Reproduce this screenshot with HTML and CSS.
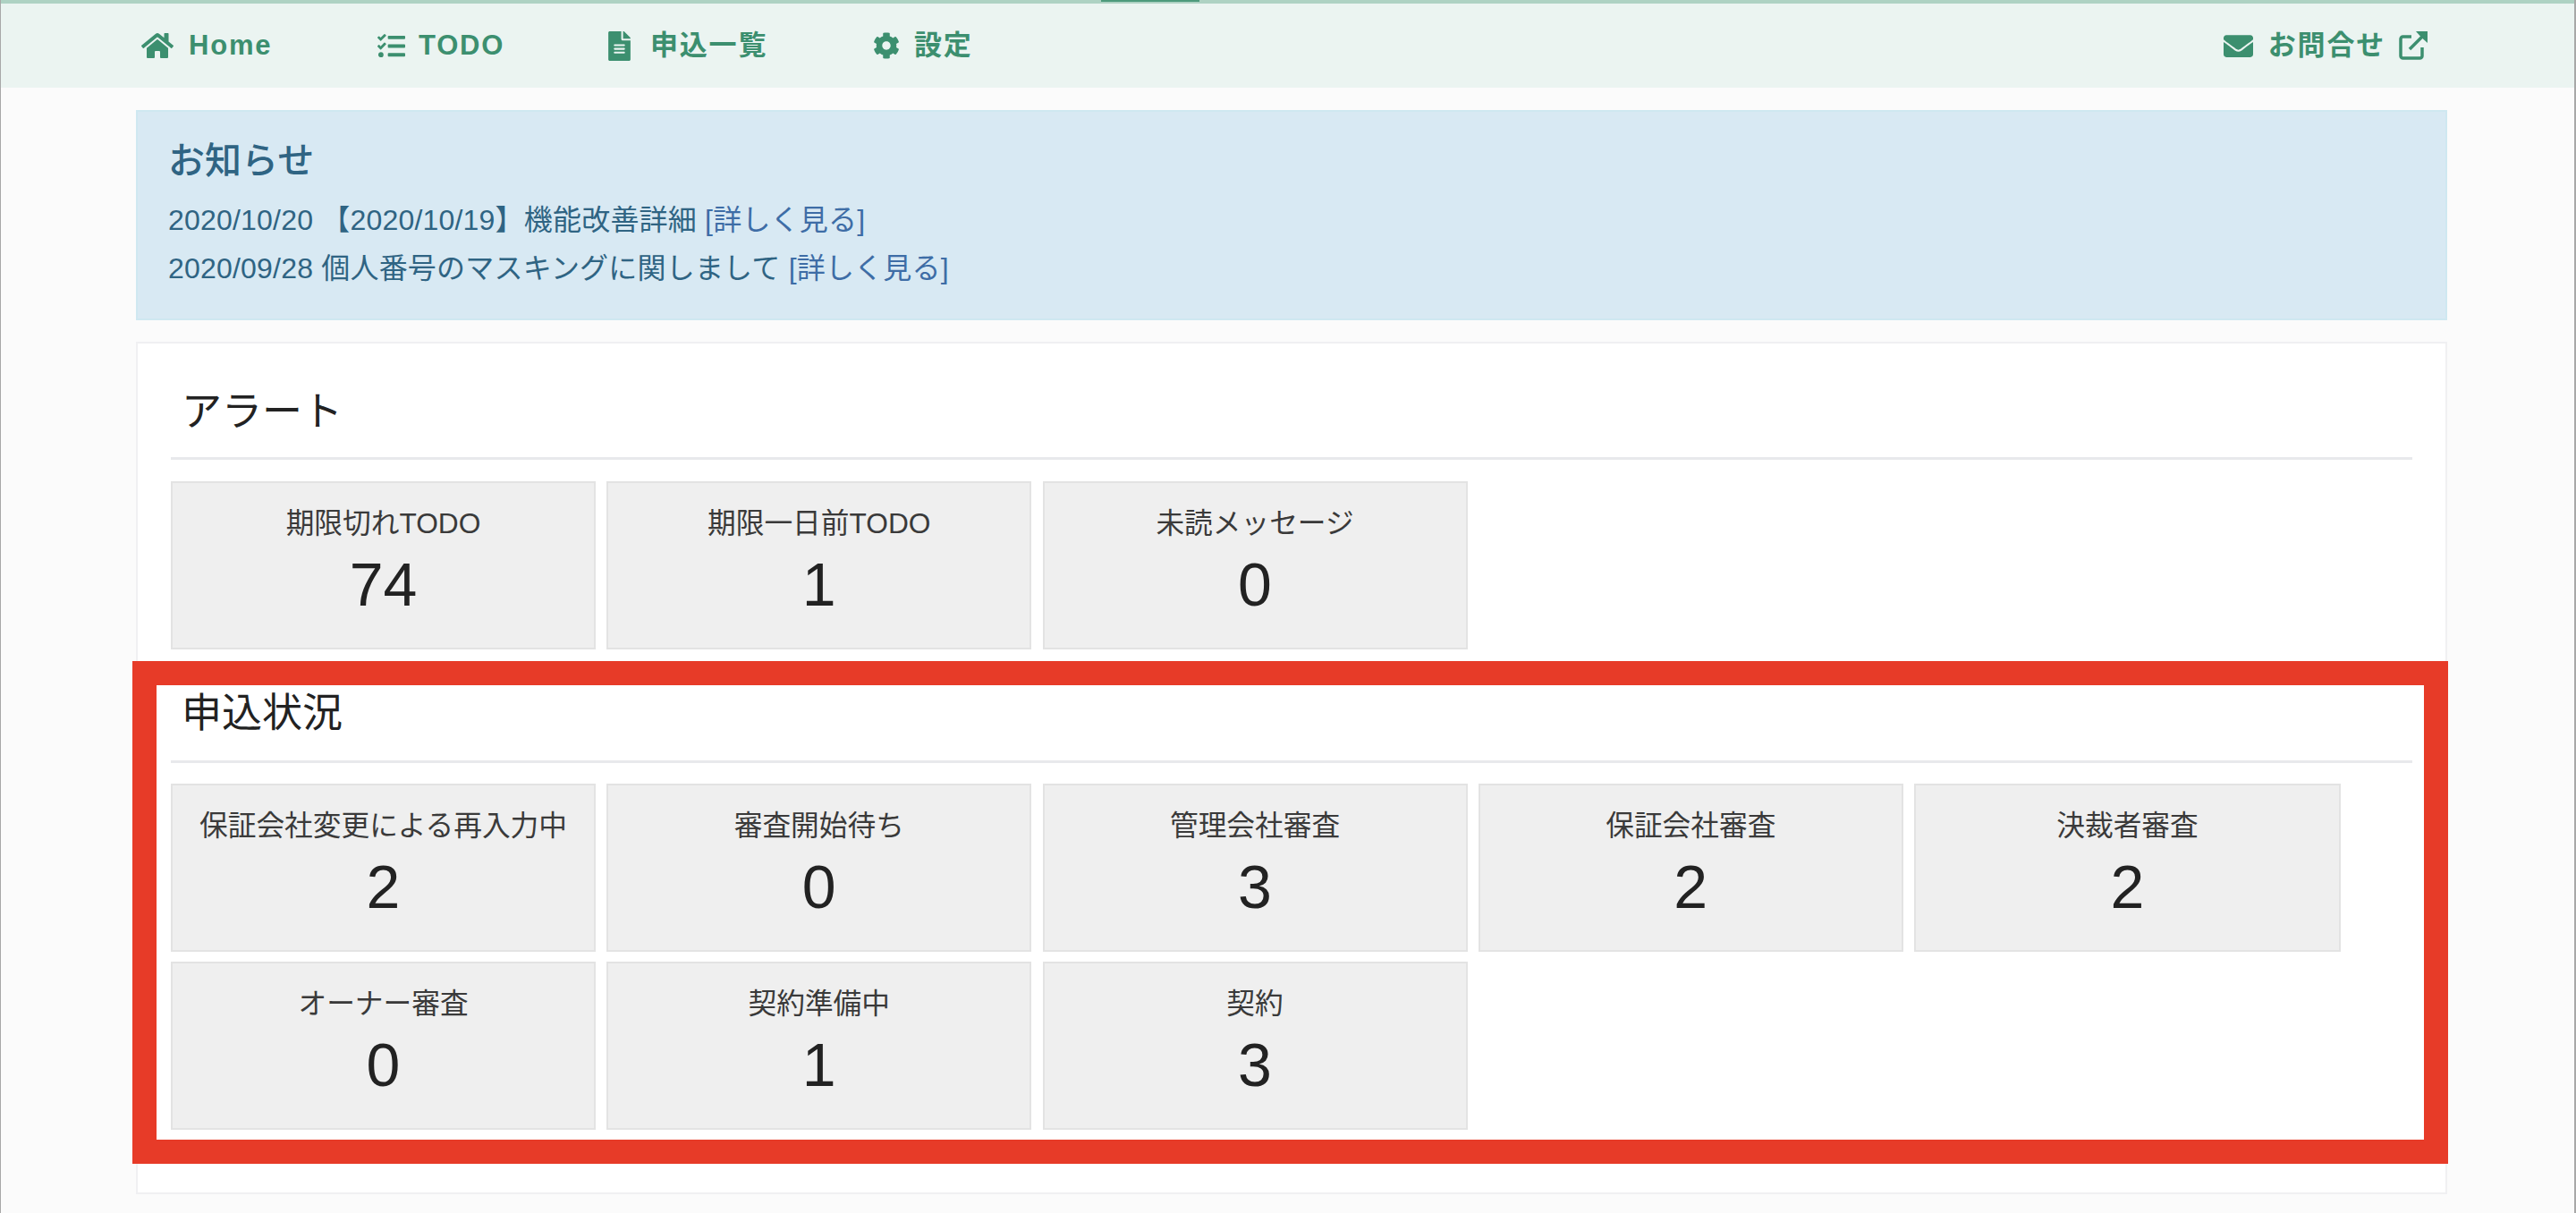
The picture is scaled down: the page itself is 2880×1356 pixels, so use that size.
FILE: index.html
```html
<!DOCTYPE html>
<html lang="ja">
<head>
<meta charset="utf-8">
<title>ダッシュボード</title>
<link rel="stylesheet" href="styles.css">
</head>
<body>
<div class="page">
  <nav class="nav">
    <div class="nav-group">
      <a class="nav-item nav-home"><svg class="ico ico-home" viewBox="0 0 576 512"><path d="M280.37 148.26L96 300.11V464a16 16 0 0 0 16 16l112.06-.29a16 16 0 0 0 15.92-16V368a16 16 0 0 1 16-16h64a16 16 0 0 1 16 16v95.64a16 16 0 0 0 16 16.05L464 480a16 16 0 0 0 16-16V300L295.67 148.26a12.19 12.19 0 0 0-15.3 0zM571.6 251.47L488 182.56V44.05a12 12 0 0 0-12-12h-56a12 12 0 0 0-12 12v72.61L318.47 43a48 48 0 0 0-61 0L4.34 251.47a12 12 0 0 0-1.6 16.9l25.5 31A12 12 0 0 0 45.15 301l235.22-193.74a12.19 12.19 0 0 1 15.3 0L530.9 301a12 12 0 0 0 16.9-1.6l25.5-31a12 12 0 0 0-1.7-16.93z"/></svg>Home</a>
      <a class="nav-item nav-todo"><svg class="ico ico-tasks" viewBox="0 0 512 512"><path d="M139.61 35.5a12 12 0 0 0-17 0L58.93 98.81l-22.7-22.12a12 12 0 0 0-17 0L3.53 92.41a12 12 0 0 0 0 17l47.59 47.4a12.78 12.78 0 0 0 17.61 0l15.59-15.62L156.52 69a12.09 12.09 0 0 0 .09-17zm0 159.19a12 12 0 0 0-17 0l-63.68 63.72-22.7-22.1a12 12 0 0 0-17 0L3.53 252a12 12 0 0 0 0 17L51 316.5a12.77 12.77 0 0 0 17.6 0l15.7-15.69 72.2-72.22a12 12 0 0 0 .09-16.9zM64 368c-26.49 0-48.59 21.5-48.59 48S37.53 464 64 464a48 48 0 0 0 0-96zm432 16H208a16 16 0 0 0-16 16v32a16 16 0 0 0 16 16h288a16 16 0 0 0 16-16v-32a16 16 0 0 0-16-16zm0-320H208a16 16 0 0 0-16 16v32a16 16 0 0 0 16 16h288a16 16 0 0 0 16-16V80a16 16 0 0 0-16-16zm0 160H208a16 16 0 0 0-16 16v32a16 16 0 0 0 16 16h288a16 16 0 0 0 16-16v-32a16 16 0 0 0-16-16z"/></svg>TODO</a>
      <a class="nav-item nav-list"><svg class="ico ico-file" viewBox="0 0 384 512"><path d="M224 136V0H24C10.7 0 0 10.7 0 24v464c0 13.3 10.7 24 24 24h336c13.3 0 24-10.7 24-24V160H248c-13.2 0-24-10.8-24-24zm64 236c0 6.6-5.4 12-12 12H108c-6.6 0-12-5.4-12-12v-8c0-6.6 5.4-12 12-12h168c6.6 0 12 5.4 12 12v8zm0-64c0 6.6-5.4 12-12 12H108c-6.6 0-12-5.4-12-12v-8c0-6.6 5.4-12 12-12h168c6.6 0 12 5.4 12 12v8zm0-72v8c0 6.6-5.4 12-12 12H108c-6.6 0-12-5.4-12-12v-8c0-6.6 5.4-12 12-12h168c6.6 0 12 5.4 12 12zm96-114.1v6.1H256V0h6.1c6.4 0 12.5 2.5 17 7l97.9 98c4.5 4.5 7 10.6 7 16.9z"/></svg>申込一覧</a>
      <a class="nav-item nav-settings"><svg class="ico ico-cog" viewBox="0 0 512 512"><path d="M487.4 315.7l-42.6-24.6c4.3-23.2 4.3-47 0-70.2l42.6-24.6c4.9-2.8 7.1-8.6 5.5-14-11.1-35.6-30-67.8-54.7-94.6-3.8-4.1-10-5.1-14.8-2.3L380.8 110c-17.9-15.4-38.5-27.3-60.8-35.1V25.8c0-5.6-3.9-10.5-9.4-11.7-36.7-8.2-74.3-7.8-109.2 0-5.5 1.2-9.4 6.1-9.4 11.7V75c-22.2 7.9-42.8 19.8-60.8 35.1L88.7 85.5c-4.9-2.8-11-1.9-14.8 2.3-24.7 26.7-43.6 58.9-54.7 94.6-1.7 5.4.6 11.2 5.5 14L67.3 221c-4.3 23.2-4.3 47 0 70.2l-42.6 24.6c-4.9 2.8-7.1 8.6-5.5 14 11.1 35.6 30 67.8 54.7 94.6 3.8 4.1 10 5.1 14.8 2.3l42.6-24.6c17.9 15.4 38.5 27.3 60.8 35.1v49.2c0 5.6 3.9 10.5 9.4 11.7 36.7 8.2 74.3 7.8 109.2 0 5.5-1.2 9.4-6.1 9.4-11.7v-49.2c22.2-7.9 42.8-19.8 60.8-35.1l42.6 24.6c4.9 2.8 11 1.9 14.8-2.3 24.7-26.7 43.6-58.9 54.7-94.6 1.5-5.5-.7-11.3-5.6-14.1zM256 336c-44.1 0-80-35.9-80-80s35.9-80 80-80 80 35.9 80 80-35.9 80-80 80z"/></svg>設定</a>
    </div>
    <a class="nav-item nav-contact"><svg class="ico ico-mail" viewBox="0 0 512 512"><path d="M502.3 190.8c3.9-3.1 9.7-.2 9.7 4.7V400c0 26.5-21.5 48-48 48H48c-26.5 0-48-21.5-48-48V195.6c0-5 5.7-7.8 9.7-4.7 22.4 17.4 52.1 39.5 154.1 113.6 21.1 15.4 56.7 47.8 92.2 47.6 35.7.3 72-32.8 92.3-47.6 102-74.1 131.6-96.3 154-113.7zM256 320c23.2.4 56.6-29.2 73.4-41.4 132.7-96.3 142.8-104.7 173.4-128.7 5.8-4.5 9.2-11.5 9.2-18.9v-19c0-26.5-21.5-48-48-48H48C21.5 64 0 85.5 0 112v19c0 7.4 3.4 14.3 9.2 18.9 30.6 23.9 40.7 32.4 173.4 128.7 16.8 12.2 50.2 41.8 73.4 41.4z"/></svg>お問合せ<svg class="ico ico-ext" viewBox="0 0 32 32"><path class="ext-line" d="M14 6H4.500A2.500 2.500 0 0 0 2 8.500V27.500A2.500 2.500 0 0 0 4.500 30H23.500A2.500 2.500 0 0 0 26 27.500V18"/><path class="ext-line" d="M12 20L28 4"/><path d="M19 0H32V13L27.500 9L23 4.500Z"/></svg></a>
  </nav>

  <main class="main">
    <section class="notice">
      <h2 class="notice-title">お知らせ</h2>
      <p class="notice-line">2020/10/20 【2020/10/19】機能改善詳細 <a class="notice-link">[詳しく見る]</a></p>
      <p class="notice-line">2020/09/28 個人番号のマスキングに関しまして <a class="notice-link">[詳しく見る]</a></p>
    </section>

    <section class="card">
      <h3 class="section-title section-alert">アラート</h3>
      <div class="tiles">
        <div class="tile"><div class="tile-label">期限切れTODO</div><div class="tile-value">74</div></div>
        <div class="tile"><div class="tile-label">期限一日前TODO</div><div class="tile-value">1</div></div>
        <div class="tile"><div class="tile-label">未読メッセージ</div><div class="tile-value">0</div></div>
      </div>
      <h3 class="section-title section-status">申込状況</h3>
      <div class="tiles">
        <div class="tile"><div class="tile-label">保証会社変更による再入力中</div><div class="tile-value">2</div></div>
        <div class="tile"><div class="tile-label">審査開始待ち</div><div class="tile-value">0</div></div>
        <div class="tile"><div class="tile-label">管理会社審査</div><div class="tile-value">3</div></div>
        <div class="tile"><div class="tile-label">保証会社審査</div><div class="tile-value">2</div></div>
        <div class="tile tile-wide"><div class="tile-label">決裁者審査</div><div class="tile-value">2</div></div>
        <div class="tile"><div class="tile-label">オーナー審査</div><div class="tile-value">0</div></div>
        <div class="tile"><div class="tile-label">契約準備中</div><div class="tile-value">1</div></div>
        <div class="tile"><div class="tile-label">契約</div><div class="tile-value">3</div></div>
      </div>
    </section>
  </main>
  <div class="highlight"></div>
</div>
</body>
</html>
```
FILE: styles.css
```css
* { box-sizing: border-box; }
html, body { margin: 0; padding: 0; }
body {
  background: #fbfbfb;
  font-family: "Liberation Sans", "Noto Sans CJK JP", sans-serif;
  color: #333;
}
.page {
  position: relative;
  width: 2880px;
  height: 1356px;
  overflow: hidden;
  border-left: 1px solid #a8a8a8;
  border-right: 2px solid #a8a8a8;
}
.page::before {
  content: "";
  position: absolute;
  left: 1230px;
  top: 0;
  width: 110px;
  height: 2px;
  background: #4d9a7c;
}

/* nav */
.nav {
  height: 98px;
  background: #ebf4f1;
  border-top: 4px solid #aed2c3;
  display: flex;
  justify-content: space-between;
  align-items: center;
  padding: 0 164px 0 157px;
}
.nav-group { display: flex; align-items: center; }
.nav-item {
  display: flex;
  align-items: center;
  color: #3c8f6f;
  font-weight: 700;
  font-size: 31px;
  letter-spacing: 1.800px;
  line-height: 40px;
}
.nav-home { width: 264px; }
.nav-todo { width: 258px; }
.nav-list { width: 296px; }
.ico { fill: #3c8f6f; flex: none; display: block; }
.ico-home { width: 36px; height: 32px; margin-right: 17px; }
.ico-tasks { width: 31px; height: 31px; margin-right: 15px; }
.ico-file { width: 25px; height: 33px; margin-right: 22px; }
.ico-cog { width: 30px; height: 30px; margin-right: 16px; }
.ico-mail { width: 33px; height: 33px; margin-right: 17px; }
.ico-ext { width: 32px; height: 32px; margin-left: 15px; }
.ext-line { fill: none; stroke: #3c8f6f; stroke-width: 3.500; }

/* main */
.main { padding: 25px 0 0 151px; width: 2735px; }

.notice {
  background: #d8e9f3;
  border: 2px solid #cfe8f1;
  height: 235px;
  padding: 30px 34px 0;
  color: #2f6483;
}
.notice-title {
  margin: 0 0 14px;
  font-size: 41px;
  line-height: 50px;
  font-weight: 500;
}
.notice-line {
  margin: 0;
  font-size: 32px;
  line-height: 54px;
  letter-spacing: 0.200px;
}
.notice-link { color: #3e6da6; }

.card {
  margin-top: 24px;
  background: #fff;
  border: 2px solid #f0f0f2;
  height: 953px;
  padding: 47px 37px 0;
}
.section-title {
  margin: 0;
  font-size: 45px;
  line-height: 60px;
  font-weight: 400;
  color: #222;
  padding-left: 12px;
  border-bottom: 3px solid #e8e9ec;
}
.section-alert { padding-bottom: 20px; margin-bottom: 24px; }
.section-status { margin-top: 42px; padding-bottom: 22px; margin-bottom: 23px; }

.tiles {
  display: flex;
  flex-wrap: wrap;
  gap: 11px 12.250px;
}
.tile {
  width: 475px;
  background: #efefef;
  border: 2px solid #e3e3e3;
  height: 188px;
  padding-top: 22px;
  text-align: center;
}
.tile-wide { width: 477px; }
.tile-label {
  font-size: 31.700px;
  line-height: 46px;
  color: #3a3a3a;
}
.tile-value {
  font-size: 68px;
  line-height: 90px;
  color: #222;
}

/* annotation frame over the second section */
.highlight {
  position: absolute;
  left: 147px;
  top: 739px;
  width: 2589px;
  height: 562px;
  border: 27px solid #e73b28;
}
```
